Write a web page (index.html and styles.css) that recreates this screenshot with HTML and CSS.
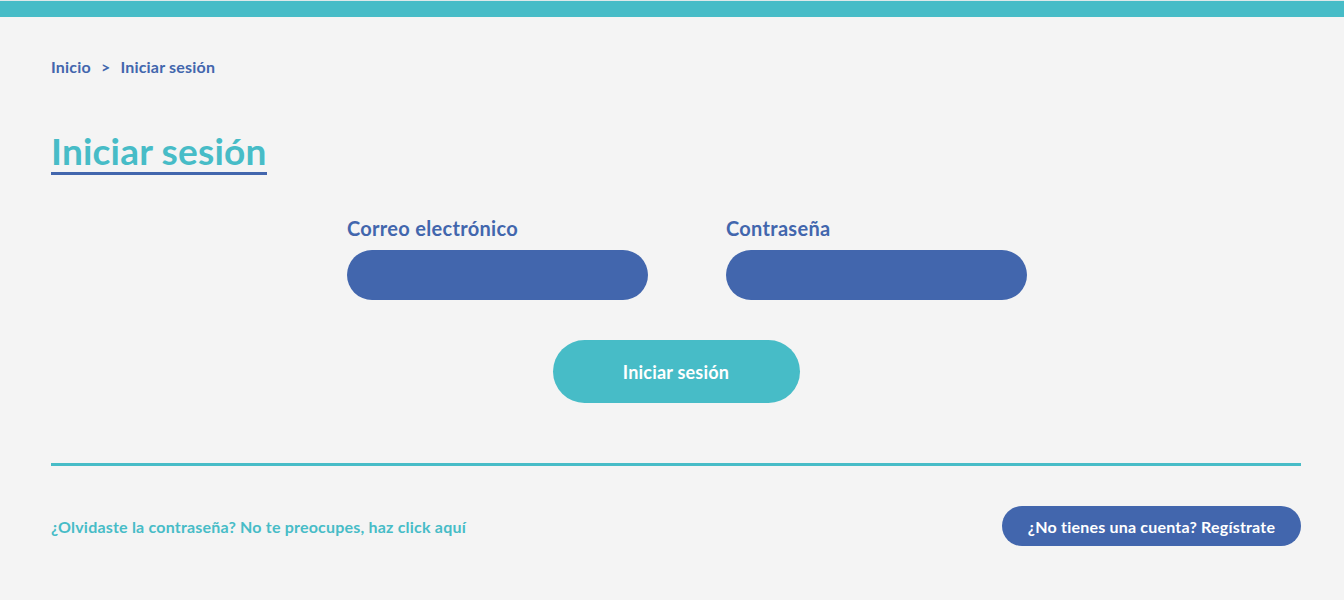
FILE: index.html
```html
<!DOCTYPE html>
<html lang="es">
<head>
<meta charset="utf-8">
<title>Iniciar sesión</title>
<link rel="stylesheet" href="styles.css">
</head>
<body>
<div class="topbar"></div>
<main class="page">
  <nav class="crumbs">
    <a href="#">Inicio</a>
    <span class="sep">&gt;</span>
    <a href="#">Iniciar sesión</a>
  </nav>
  <h1 class="title">Iniciar sesión</h1>
  <form class="login">
    <div class="fields">
      <label class="field">
        <span class="label">Correo electrónico</span>
        <input class="input" type="email">
      </label>
      <label class="field">
        <span class="label">Contraseña</span>
        <input class="input" type="password">
      </label>
    </div>
    <div class="actions">
      <button class="submit" type="button">Iniciar sesión</button>
    </div>
  </form>
  <hr class="divider">
  <div class="footer">
    <a class="forgot" href="#">¿Olvidaste la contraseña? No te preocupes, haz click aquí</a>
    <a class="register" href="#">¿No tienes una cuenta? Regístrate</a>
  </div>
</main>
</body>
</html>
```
FILE: styles.css
```css
* { box-sizing: border-box; }
html, body { margin: 0; padding: 0; }
body {
  background: #f4f4f4;
  font-family: "Lato", "Noto Sans", sans-serif;
  font-weight: 700;
}
.topbar {
  height: 17px;
  background: #47bcc7;
  border-top: 1px solid #dfe9ea;
}
.page {
  padding: 0 43px 0 51px;
}
.crumbs {
  padding-top: 40px;
  display: flex;
  gap: 10px;
  font-size: 16px;
  line-height: 20px;
  letter-spacing: 0.2px;
}
.crumbs a { color: #4266ad; text-decoration: none; }
.crumbs .sep { color: #4266ad; }
.title {
  margin: 54px 0 0;
  display: inline-block;
  font-size: 37px;
  line-height: 40px;
  letter-spacing: 0.2px;
  color: #47bcc7;
  border-bottom: 3px solid #4266ad;
  padding-bottom: 1px;
}
.login { margin-top: 41px; }
.fields {
  display: flex;
  gap: 78px;
  padding-left: 296px;
}
.field {
  display: flex;
  flex-direction: column;
  gap: 10px;
}
.label {
  font-size: 20px;
  line-height: 24px;
  letter-spacing: 0.3px;
  color: #4266ad;
}
.input {
  width: 301px;
  height: 50px;
  border: none;
  border-radius: 25px;
  background: #4266ad;
}
.actions {
  display: flex;
  justify-content: center;
  margin-top: 40px;
}
.submit {
  width: 247px;
  height: 63px;
  border: none;
  border-radius: 32px;
  background: #47bcc7;
  color: #fff;
  font-family: inherit;
  font-weight: 700;
  font-size: 18px;
  letter-spacing: 0.2px;
}
.divider {
  margin: 60px 0 0;
  border: none;
  height: 3px;
  background: #47bcc7;
}
.footer {
  margin-top: 40px;
  display: flex;
  justify-content: space-between;
  align-items: center;
}
.forgot {
  color: #47bcc7;
  font-size: 16px;
  letter-spacing: 0.2px;
  text-decoration: none;
}
.register {
  display: flex;
  align-items: center;
  justify-content: center;
  width: 299px;
  height: 40px;
  border-radius: 20px;
  background: #4266ad;
  color: #fff;
  font-size: 16px;
  letter-spacing: 0.2px;
  text-decoration: none;
}
```
